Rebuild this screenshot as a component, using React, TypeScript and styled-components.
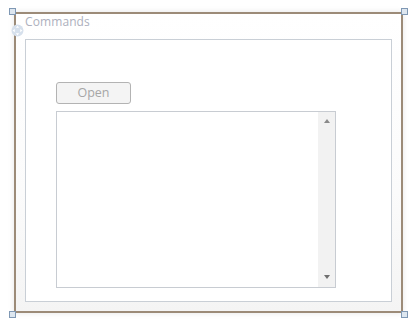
import React from "react";
import styled, { createGlobalStyle } from "styled-components";

const Global = createGlobalStyle`
  html, body { margin: 0; padding: 0; background: #ffffff; }
  body { font-family: "Open Sans", "Noto Sans", sans-serif; }
`;

const Page = styled.div`
  width: 415px;
  height: 324px;
  box-sizing: border-box;
  padding: 12px 0 0 14px;
  background: #ffffff;
`;

const Frame = styled.div`
  position: relative;
  width: 389px;
  height: 301px;
  box-sizing: border-box;
  border: 2px solid #9c8b78;
  background: linear-gradient(#ffffff 0%, #fbfbfb 60%, #f4f4f4 100%);
  box-shadow: 0 0 6px rgba(0, 0, 0, 0.1);
  display: flex;
  flex-direction: column;
  padding: 0 9px 9px 9px;
`;

const Handle = styled.div<{ $x: "left" | "right"; $y: "top" | "bottom" }>`
  position: absolute;
  width: 5px;
  height: 5px;
  border: 1px solid #7f98b4;
  background: #dde6ef;
  ${(p) => (p.$x === "left" ? "left: -7px;" : "right: -7px;")}
  ${(p) => (p.$y === "top" ? "top: -6px;" : "bottom: -7px;")}
`;

const MoveIcon = styled.svg`
  position: absolute;
  left: -5px;
  top: 10px;
  width: 13px;
  height: 13px;
  filter: blur(0.4px);
`;

const Title = styled.div`
  font-size: 12px;
  line-height: 16px;
  height: 25px;
  color: #adb0bd;
  letter-spacing: 0.1px;
`;

const Inner = styled.div`
  flex: 1;
  border: 1px solid #c9cfd6;
  background: #ffffff;
  padding: 42px 0 0 30px;
  display: flex;
  flex-direction: column;
  gap: 7px;
`;

const Button = styled.button`
  width: 75px;
  height: 22px;
  box-sizing: border-box;
  border: 1px solid #b3b3b3;
  border-radius: 3px;
  background: #f4f4f4;
  color: #a6a6a6;
  font-family: "Open Sans", "Noto Sans", sans-serif;
  font-size: 12.5px;
  padding: 0;
  line-height: 20px;
`;

const ListBox = styled.div`
  width: 280px;
  height: 177px;
  box-sizing: border-box;
  border: 1px solid #c8ccd2;
  background: #ffffff;
  display: flex;
  justify-content: flex-end;
`;

const ScrollBar = styled.div`
  width: 17px;
  background: #f2f2f2;
  display: flex;
  flex-direction: column;
  justify-content: space-between;
  align-items: center;
  padding: 7px 0 8px 0;
`;

const Arrow = styled.div<{ $dir: "up" | "down" }>`
  width: 0;
  height: 0;
  border-left: 3px solid transparent;
  border-right: 3px solid transparent;
  ${(p) =>
    p.$dir === "up"
      ? "border-bottom: 4px solid #8a8a8a;"
      : "border-top: 4px solid #6f6f6f;"}
`;

export default function App() {
  return (
    <>
      <Global />
      <Page>
        <Frame>
          <Handle $x="left" $y="top" />
          <Handle $x="right" $y="top" />
          <Handle $x="left" $y="bottom" />
          <Handle $x="right" $y="bottom" />
          <MoveIcon viewBox="0 0 12 12">
            <circle cx="6" cy="6" r="5.5" fill="#d6e0ec" />
            <path d="M6 1.5 L7.5 3.5 H4.5 Z M6 10.5 L7.5 8.5 H4.5 Z M1.5 6 L3.5 4.5 V7.5 Z M10.5 6 L8.5 4.5 V7.5 Z" fill="#ffffff" />
          </MoveIcon>
          <Title>Commands</Title>
          <Inner>
            <Button>Open</Button>
            <ListBox>
              <ScrollBar>
                <Arrow $dir="up" />
                <Arrow $dir="down" />
              </ScrollBar>
            </ListBox>
          </Inner>
        </Frame>
      </Page>
    </>
  );
}
